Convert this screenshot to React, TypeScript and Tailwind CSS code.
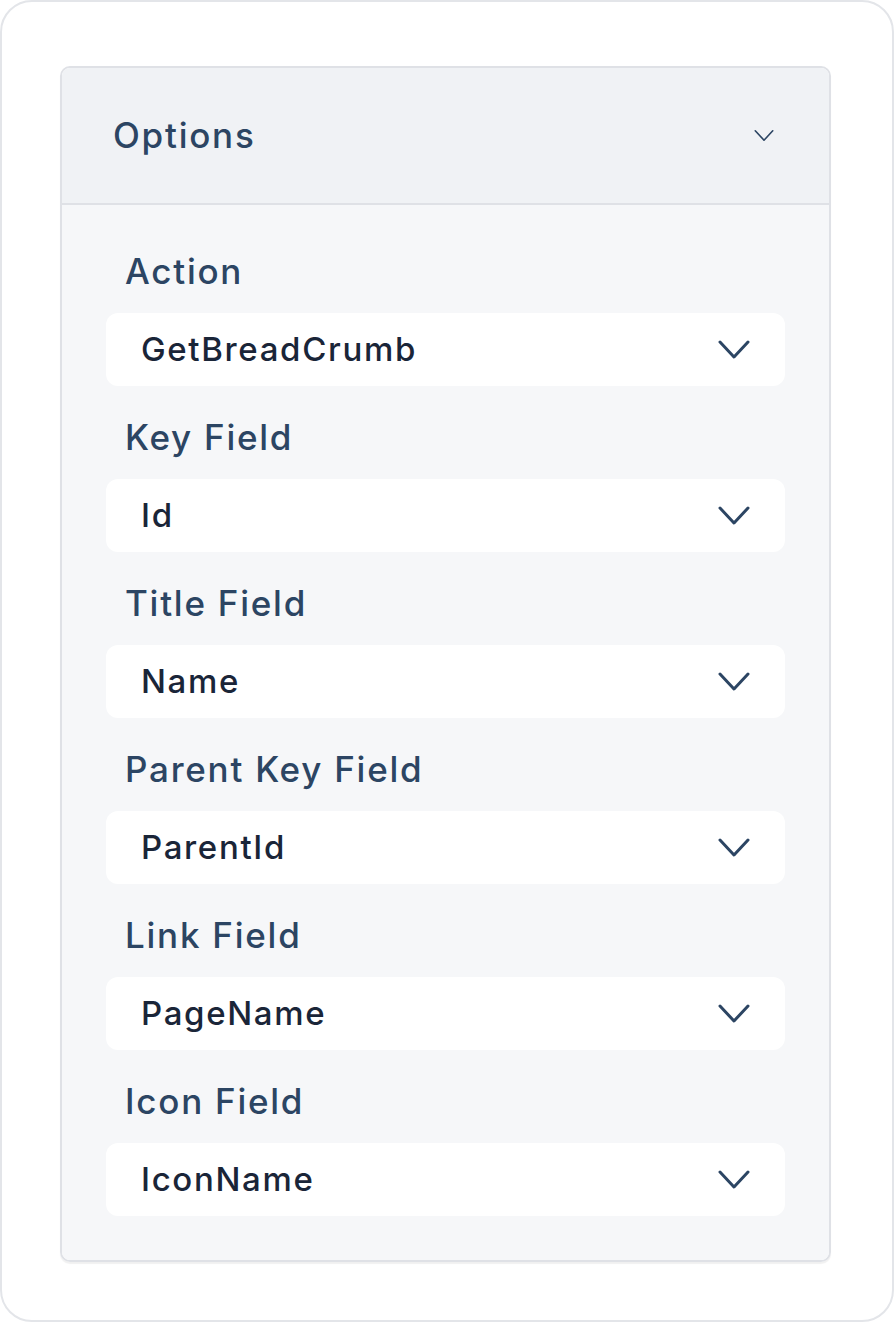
import React from "react";

const fields = [
  { label: "Action", value: "GetBreadCrumb" },
  { label: "Key Field", value: "Id" },
  { label: "Title Field", value: "Name" },
  { label: "Parent Key Field", value: "ParentId" },
  { label: "Link Field", value: "PageName" },
  { label: "Icon Field", value: "IconName" },
];

function Chevron({ className, strokeWidth }: { className: string; strokeWidth: number }) {
  return (
    <svg viewBox="0 0 32 19" className={className} fill="none" stroke="currentColor" strokeWidth={strokeWidth} strokeLinecap="round" strokeLinejoin="round">
      <path d="M2 2 L16 17 L30 2" />
    </svg>
  );
}

export default function App() {
  return (
    <div className="w-[894px] h-[1322px] bg-white" style={{ fontFamily: "Inter, 'Noto Sans', sans-serif" }}>
      <div className="h-full border-2 border-[#e3e5e9] rounded-[32px] pt-[64px] pl-[58px] pr-[61px] pb-[58px]">
        <div className="border-2 border-[#dfe1e6] rounded-[10px] overflow-hidden shadow-[0_2px_1px_rgba(0,0,0,0.06)]">
          {/* header */}
          <div className="h-[137px] bg-[#f0f2f5] border-b-2 border-[#dfe1e6] flex items-center justify-between pl-[51px] pr-[55px]">
            <span className="text-[35px] font-medium tracking-[0.05em] text-[#2c4563]">Options</span>
            <Chevron className="w-[20px] h-[13px] text-[#2c4563]" strokeWidth={2.6} />
          </div>
          {/* body */}
          <div className="bg-[#f6f7f9] px-[44px] pt-[46px] pb-[44px] flex flex-col gap-[31px]">
            {fields.map((f) => (
              <div key={f.label} className="flex flex-col">
                <label className="text-[35px] leading-[40px] font-medium tracking-[0.05em] text-[#2c4563] pl-[19px] mb-[22px]">
                  {f.label}
                </label>
                <div className="h-[73px] bg-white rounded-[12px] flex items-center justify-between pl-[35px] pr-[35px]">
                  <span className="text-[33px] font-medium tracking-[0.05em] text-[#1a2538]">{f.value}</span>
                  <Chevron className="w-[32px] h-[19px] text-[#2c4563]" strokeWidth={3} />
                </div>
              </div>
            ))}
          </div>
        </div>
      </div>
    </div>
  );
}
